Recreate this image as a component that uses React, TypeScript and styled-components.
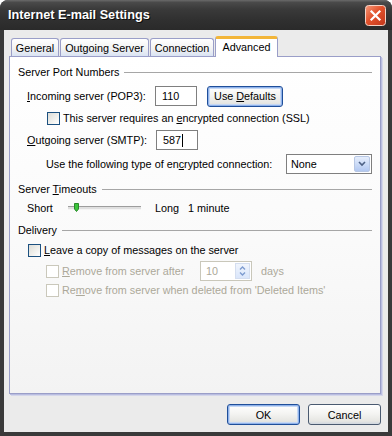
import styled, { createGlobalStyle, css } from "styled-components";

const GlobalStyle = createGlobalStyle`
  html, body {
    margin: 0;
    padding: 0;
    background: #ffffff;
  }
  body {
    font-family: "Liberation Sans", Arial, sans-serif;
    font-size: 10.8px;
    color: #000;
  }
`;

const Window = styled.div`
  width: 392px;
  height: 436px;
  display: flex;
  flex-direction: column;
  border-radius: 8px 8px 0 0;
  overflow: hidden;
  background: #353535;
`;

const TitleBar = styled.div`
  height: 30px;
  flex-shrink: 0;
  display: flex;
  align-items: center;
  justify-content: space-between;
  padding: 0 6px 0 8px;
  box-sizing: border-box;
  background: linear-gradient(#6a6a6a 0%, #4a4a4a 8%, #3a3a3a 30%, #2f2f2f 70%, #2a2a2a 100%);
`;

const Title = styled.div`
  color: #fff;
  font-family: "Liberation Sans", Arial, sans-serif;
  font-weight: bold;
  font-size: 12.7px;
  text-shadow: 1px 1px 0 #0a0a0a;
`;

const CloseIcon = styled.svg`
  display: block;
  flex-shrink: 0;
`;

const Frame = styled.div`
  flex: 1;
  display: flex;
  flex-direction: column;
  padding: 0 4px 4px 4px;
  background: #3a3a3a;
`;

const Body = styled.div`
  flex: 1;
  display: flex;
  flex-direction: column;
  background: #ebebeb;
  padding: 6px 7px 0 5px;
`;

const TabStrip = styled.div`
  height: 20px;
  display: flex;
  align-items: flex-end;
  gap: 1px;
  padding-left: 2px;
  position: relative;
  z-index: 2;
`;

const Tab = styled.div<{ $w: number; $active?: boolean }>`
  width: ${(p) => p.$w}px;
  height: 18px;
  box-sizing: border-box;
  display: flex;
  align-items: center;
  justify-content: center;
  border: 1px solid #9a9ec8;
  border-bottom: none;
  border-radius: 3px 3px 0 0;
  background: linear-gradient(#ffffff 0%, #f3f3f3 55%, #d9e3f3 100%);
  padding-top: 1px;
  ${(p) =>
    p.$active &&
    css`
      height: 21px;
      margin-bottom: -1px;
      background: #ffffff;
      border-top: 3px solid #f2b539;
      padding-top: 0;
      padding-bottom: 2px;
    `}
`;

const Panel = styled.div`
  flex: 1;
  border: 1px solid #9a9ec8;
  box-shadow: 1px 1px 0 #b9bde0, 2px 2px 0 #d4d6ea;
  background: linear-gradient(#ffffff 0%, #fafafa 55%, #f3f3f3 100%);
  padding: 8px 8px 0 8px;
  display: flex;
  flex-direction: column;
`;

const Row = styled.div<{ $mt: number; $h: number; $indent?: number }>`
  display: flex;
  align-items: center;
  height: ${(p) => p.$h}px;
  margin-top: ${(p) => p.$mt}px;
  padding-left: ${(p) => p.$indent ?? 0}px;
  white-space: nowrap;
`;

const SectionTitle = styled.span`
  margin-right: 5px;
`;

const Rule = styled.div`
  flex: 1;
  height: 0;
  border-top: 1px solid #a6a6a6;
  margin-top: 1px;
`;

const Label = styled.span<{ $w?: number; $disabled?: boolean }>`
  display: inline-block;
  width: ${(p) => (p.$w ? `${p.$w}px` : "auto")};
  color: ${(p) => (p.$disabled ? "#aca899" : "#000")};
`;

const TextBox = styled.div<{ $w: number; $h: number }>`
  width: ${(p) => p.$w}px;
  height: ${(p) => p.$h}px;
  box-sizing: border-box;
  border: 1px solid #7f7f7f;
  background: #fff;
  display: flex;
  align-items: center;
  padding-left: 6px;
`;

const Caret = styled.span`
  display: inline-block;
  width: 1px;
  height: 13px;
  background: #000;
  margin-left: 1px;
`;

const Button = styled.div<{ $w: number; $default?: boolean }>`
  width: ${(p) => p.$w}px;
  height: 21px;
  box-sizing: border-box;
  border: 1px solid ${(p) => (p.$default ? "#1f4f9a" : "#4a5a70")};
  border-radius: 3px;
  background: linear-gradient(#ffffff 0%, #f4f4f2 45%, #e6e6e2 85%, #cfd6e0 100%);
  display: flex;
  align-items: center;
  justify-content: center;
  ${(p) =>
    p.$default &&
    css`
      box-shadow: inset 0 0 0 1px #8fb2ea, inset 0 0 0 2px #c6d8f4;
    `}
`;

const Check = styled.div<{ $disabled?: boolean }>`
  width: 13px;
  height: 13px;
  box-sizing: border-box;
  flex-shrink: 0;
  border: 1px solid ${(p) => (p.$disabled ? "#cac8bb" : "#1c5180")};
  background: ${(p) =>
    p.$disabled ? "#fff" : "linear-gradient(135deg, #dcdcd7 0%, #f0f0ec 55%, #ffffff 100%)"};
  margin-right: 3px;
`;

const Select = styled.div`
  width: 86px;
  height: 20px;
  box-sizing: border-box;
  border: 1px solid #7f7f7f;
  background: #fff;
  display: flex;
  align-items: center;
  justify-content: space-between;
  padding: 1px 1px 1px 4px;
`;

const DropButton = styled.div`
  width: 16px;
  height: 16px;
  box-sizing: border-box;
  border: 1px solid #b7c7e4;
  border-radius: 2px;
  background: linear-gradient(#e6eefc 0%, #c7d8f6 60%, #b2c8f1 100%);
  display: flex;
  align-items: center;
  justify-content: center;
`;

const Spin = styled.div`
  width: 52px;
  height: 20px;
  box-sizing: border-box;
  border: 1px solid #c9c7ba;
  background: #fff;
  display: flex;
  align-items: center;
  justify-content: space-between;
  padding: 1px 1px 1px 5px;
  color: #aca899;
`;

const SpinButton = styled.div`
  width: 15px;
  height: 16px;
  box-sizing: border-box;
  border: 1px solid #d4def0;
  background: linear-gradient(#f0f5fd, #dae6fb);
  display: flex;
  align-items: center;
  justify-content: center;
`;

const Slider = styled.div`
  width: 73px;
  height: 10px;
  position: relative;
  display: flex;
  align-items: center;
`;

const Track = styled.div`
  width: 100%;
  height: 2px;
  border-top: 1px solid #9d9d9d;
  border-bottom: 1px solid #f4f4f4;
  background: #e0e0e0;
`;

const Thumb = styled.svg`
  position: absolute;
  left: 6px;
  top: 0;
`;

const Footer = styled.div`
  height: 21px;
  margin-top: 10px;
  padding-bottom: 7px;
  display: flex;
  justify-content: flex-end;
  gap: 8px;
`;

export default function App() {
  return (
    <>
      <GlobalStyle />
      <Window>
        <TitleBar>
          <Title>Internet E-mail Settings</Title>
          <CloseIcon width="21" height="21" viewBox="0 0 21 21">
            <defs>
              <linearGradient id="closeRed" x1="0" y1="0" x2="1" y2="1">
                <stop offset="0" stopColor="#f49a7c" />
                <stop offset="0.45" stopColor="#e2522c" />
                <stop offset="1" stopColor="#c2361a" />
              </linearGradient>
            </defs>
            <rect x="0.5" y="0.5" width="20" height="20" rx="3" fill="url(#closeRed)" stroke="#f3d2c6" />
            <path d="M6.5 6.5 L14.5 14.5 M14.5 6.5 L6.5 14.5" stroke="#ffffff" strokeWidth="2.2" strokeLinecap="square" />
          </CloseIcon>
        </TitleBar>
        <Frame>
          <Body>
            <TabStrip>
              <Tab $w={48}>General</Tab>
              <Tab $w={89}>Outgoing Server</Tab>
              <Tab $w={64}>Connection</Tab>
              <Tab $w={63} $active>
                Advanced
              </Tab>
            </TabStrip>
            <Panel>
              <Row $mt={0} $h={14}>
                <SectionTitle>Server Port Numbers</SectionTitle>
                <Rule />
              </Row>
              <Row $mt={7} $h={20} $indent={9}>
                <Label $w={128}>
                  <u>I</u>ncoming server (POP3):
                </Label>
                <TextBox $w={42} $h={20}>110</TextBox>
                <Button $w={76} $default style={{ marginLeft: 10 }}>
                  <span>
                    Use <u>D</u>efaults
                  </span>
                </Button>
              </Row>
              <Row $mt={5} $h={14} $indent={29}>
                <Check />
                <Label>
                  This server requires an <u>e</u>ncrypted connection (SSL)
                </Label>
              </Row>
              <Row $mt={5} $h={20} $indent={9}>
                <Label $w={129}>
                  <u>O</u>utgoing server (SMTP):
                </Label>
                <TextBox $w={42} $h={20}>
                  587
                  <Caret />
                </TextBox>
              </Row>
              <Row $mt={4} $h={20} $indent={28}>
                <Label $w={240}>
                  Use the following type of en<u>c</u>rypted connection:
                </Label>
                <Select>
                  <span>None</span>
                  <DropButton>
                    <svg width="8" height="6" viewBox="0 0 8 6">
                      <path d="M1 1 L4 4 L7 1" fill="none" stroke="#4d6185" strokeWidth="1.6" />
                    </svg>
                  </DropButton>
                </Select>
              </Row>
              <Row $mt={8} $h={14}>
                <SectionTitle>
                  Server <u>T</u>imeouts
                </SectionTitle>
                <Rule />
              </Row>
              <Row $mt={5} $h={14} $indent={9}>
                <Label $w={41}>Short</Label>
                <Slider>
                  <Track />
                  <Thumb width="5" height="9" viewBox="0 0 5 9">
                    <path d="M0.5 0.5 H4.5 V6 L2.5 8.5 L0.5 6 Z" fill="#3cc43c" stroke="#2a8a2a" strokeWidth="1" />
                  </Thumb>
                </Slider>
                <Label style={{ marginLeft: 14 }}>Long</Label>
                <Label style={{ marginLeft: 9 }}>1 minute</Label>
              </Row>
              <Row $mt={8} $h={14}>
                <SectionTitle>Delivery</SectionTitle>
                <Rule />
              </Row>
              <Row $mt={6} $h={14} $indent={10}>
                <Check />
                <Label>
                  <u>L</u>eave a copy of messages on the server
                </Label>
              </Row>
              <Row $mt={4} $h={20} $indent={28}>
                <Check $disabled />
                <Label $w={138} $disabled>
                  <u>R</u>emove from server after
                </Label>
                <Spin>
                  <span>10</span>
                  <SpinButton>
                    <svg width="7" height="12" viewBox="0 0 7 12">
                      <path d="M1 4.5 L3.5 2 L6 4.5 M1 7.5 L3.5 10 L6 7.5" fill="none" stroke="#7d9bcf" strokeWidth="1.4" />
                    </svg>
                  </SpinButton>
                </Spin>
                <Label $disabled style={{ marginLeft: 9 }}>
                  days
                </Label>
              </Row>
              <Row $mt={2} $h={14} $indent={28}>
                <Check $disabled />
                <Label $disabled>
                  Re<u>m</u>ove from server when deleted from 'Deleted Items'
                </Label>
              </Row>
            </Panel>
            <Footer>
              <Button $w={73} $default>
                OK
              </Button>
              <Button $w={73}>Cancel</Button>
            </Footer>
          </Body>
        </Frame>
      </Window>
    </>
  );
}
